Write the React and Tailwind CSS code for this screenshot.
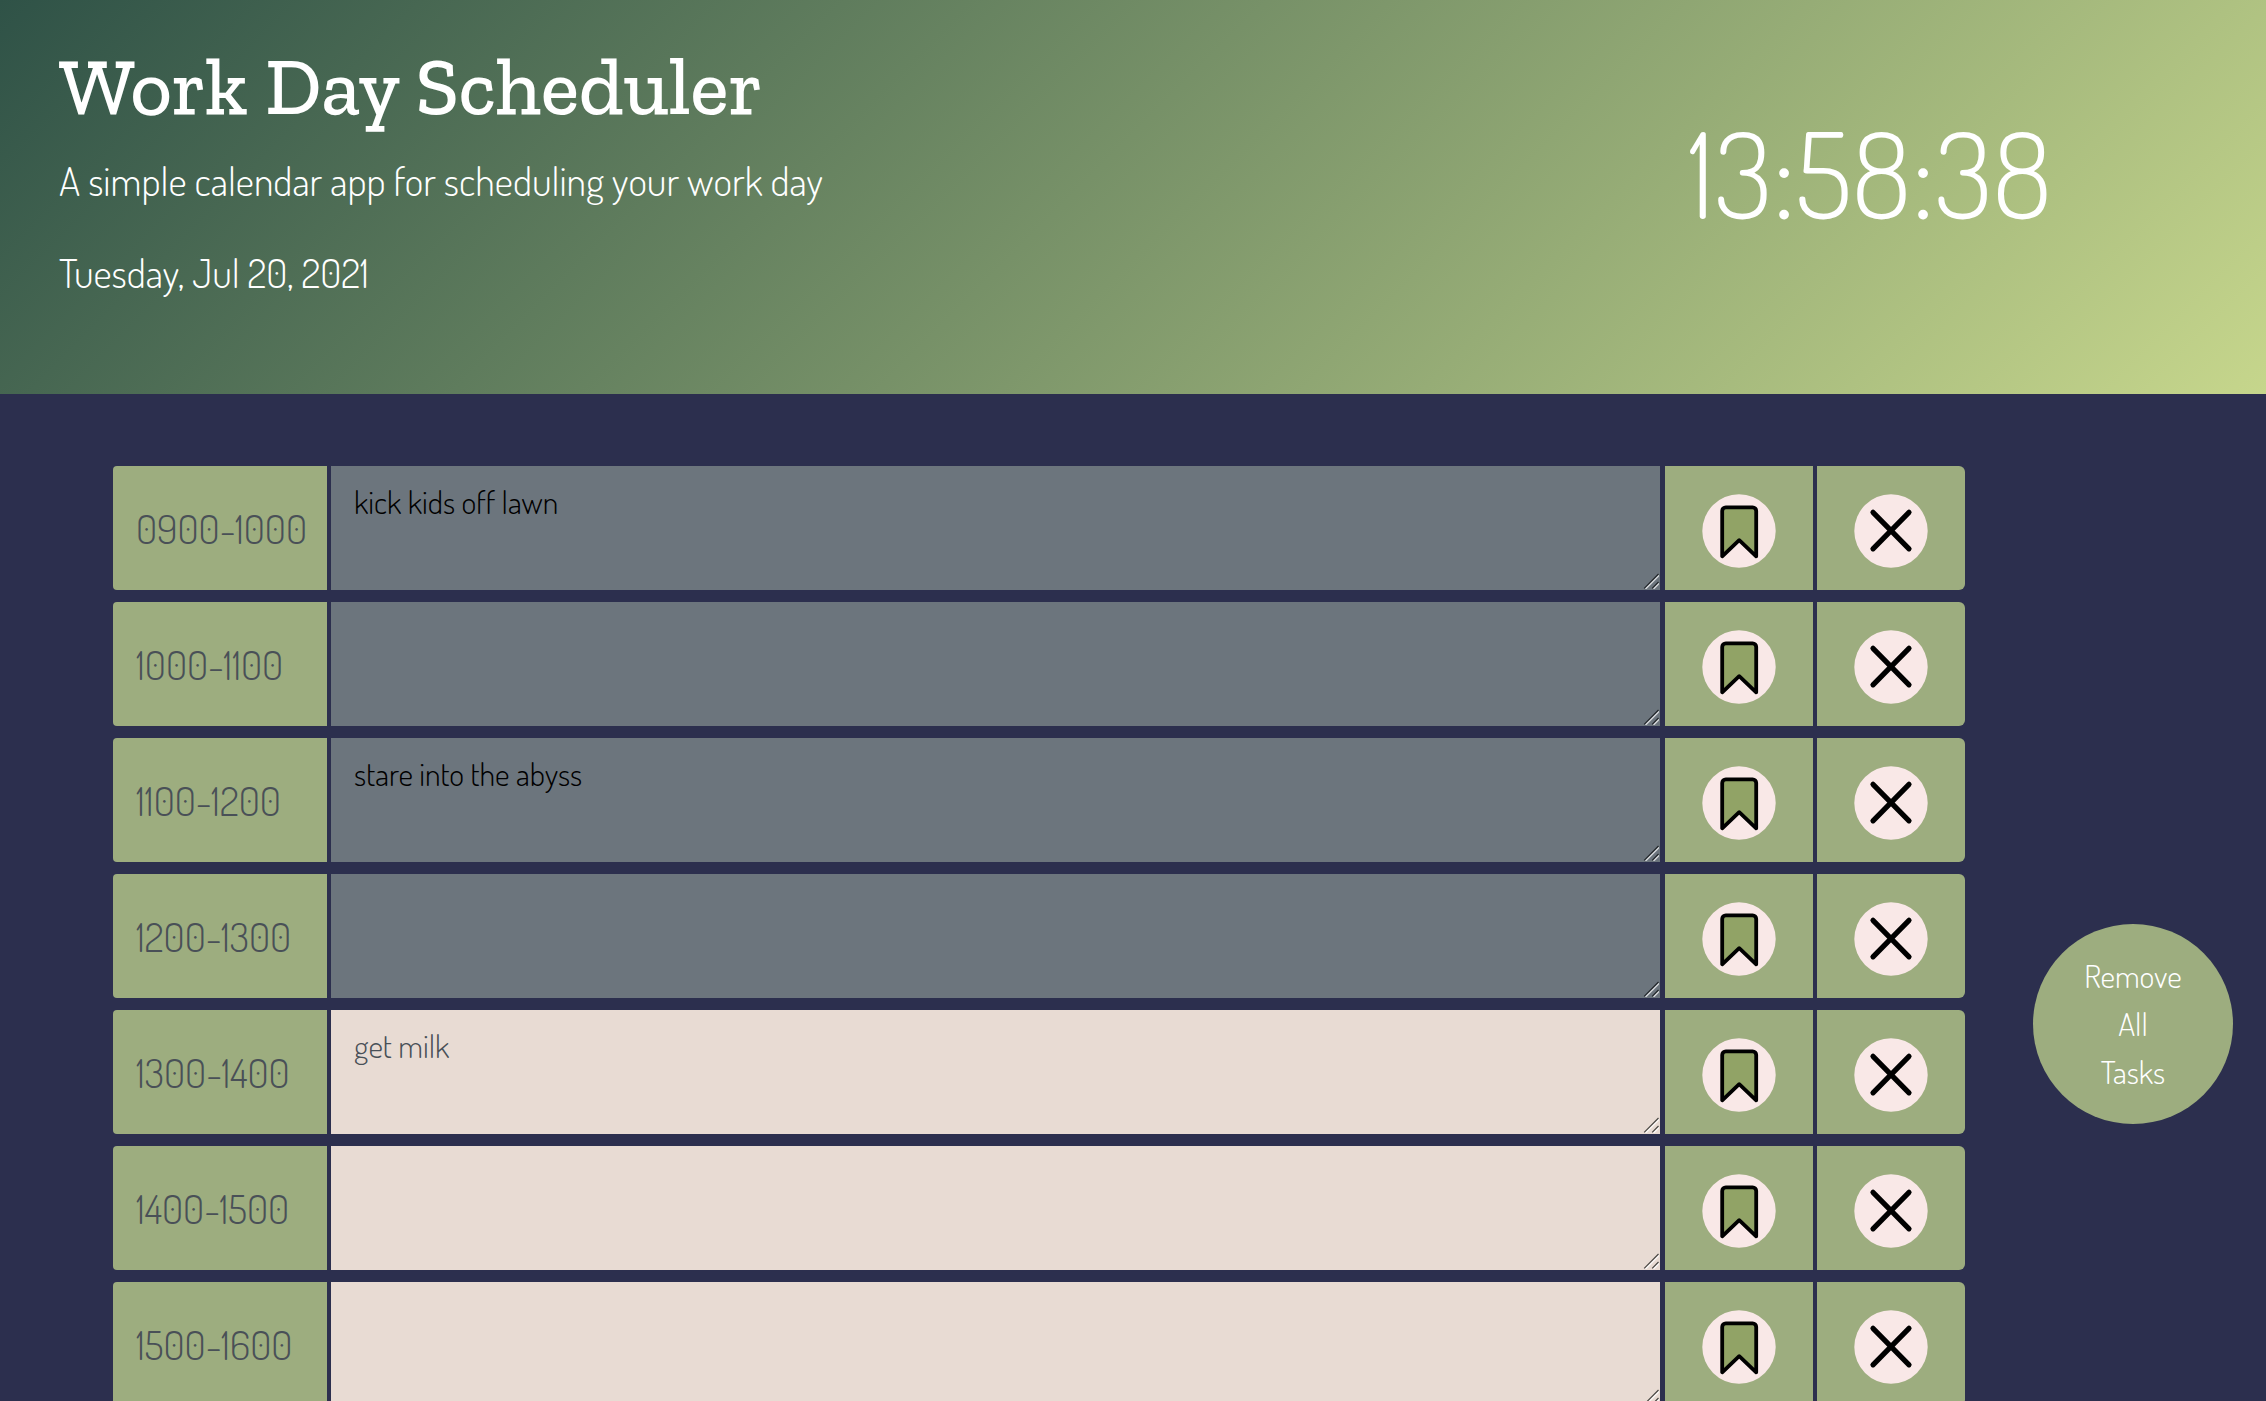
const slots = [
  { time: "0900-1000", task: "kick kids off lawn", past: true },
  { time: "1000-1100", task: "", past: true },
  { time: "1100-1200", task: "stare into the abyss", past: true },
  { time: "1200-1300", task: "", past: true },
  { time: "1300-1400", task: "get milk", past: false },
  { time: "1400-1500", task: "", past: false },
  { time: "1500-1600", task: "", past: false },
];

function BookmarkIcon() {
  return (
    <svg viewBox="0 0 74 74" className="size-[74px]" aria-hidden="true">
      <circle cx="37" cy="37" r="36.7" fill="#f9e8e7" />
      <path
        d="M20.2 62.3V17a3.6 3.6 0 0 1 3.6-3.6h26.8a3.6 3.6 0 0 1 3.6 3.6v45.3L37.2 46.2Z"
        fill="#91a366"
        stroke="#000"
        strokeWidth="3.8"
        strokeLinejoin="round"
      />
    </svg>
  );
}

function CloseIcon() {
  return (
    <svg viewBox="0 0 74 74" className="size-[74px]" aria-hidden="true">
      <circle cx="37" cy="37" r="36.7" fill="#f9e8e7" />
      <path d="M19 18.3 55 54.8M55 18.3 19 54.8" stroke="#000" strokeWidth="5.2" strokeLinecap="round" />
    </svg>
  );
}

function Grip({ past }) {
  const dark = past ? "#22262a" : "#4a4743";
  const light = past ? "#d4d7da" : "#fbf8f6";
  return (
    <svg viewBox="0 0 16 16" className="pointer-events-none absolute right-px bottom-px size-4" aria-hidden="true">
      <path d="M2.5 15.8 16 2.3M10.5 15.8 16 10.3" stroke={light} strokeWidth="1.8" />
      <path d="M1.2 15.3 15.5 1M9.2 15.3 15.5 9" stroke={dark} strokeWidth="1.2" />
    </svg>
  );
}

function SlotRow({ time, task, past }) {
  return (
    <li className="grid h-[124px] grid-cols-[214px_minmax(0,1fr)_148px_148px] gap-1">
      <label
        htmlFor={time}
        className="flex items-center rounded-l bg-[#9dad7f] pl-[23px] text-[40px] leading-none text-[#495057]"
      >
        {time}
      </label>
      <div className="relative mr-px">
        <textarea
          id={time}
          defaultValue={task}
          className={
            past
              ? "block size-full resize-none bg-[#6c757d] px-[23px] py-3 text-[32px] leading-[48px] text-black outline-none"
              : "block size-full resize-none bg-[#e8dbd3] px-[23px] py-3 text-[32px] leading-[48px] text-[#495057] outline-none"
          }
        />
        <Grip past={past} />
      </div>
      <button type="button" aria-label="Save task" className="flex items-center justify-center bg-[#9dad7f] pt-1.5">
        <BookmarkIcon />
      </button>
      <button type="button" aria-label="Remove task" className="flex items-center justify-center rounded-r-md bg-[#9dad7f] pt-1.5">
        <CloseIcon />
      </button>
    </li>
  );
}

export default function App() {
  return (
    <div className="h-screen overflow-y-auto bg-[#2c2f4e] font-['Dosis','Liberation_Sans_Narrow','Lato',sans-serif] font-light [scrollbar-width:none]">
      <header className="flex h-[394px] items-start justify-between bg-[linear-gradient(135deg,#2f5247_0%,#c6d68c_100%)] pr-[214px] pl-[59px] text-white">
        <div className="pt-[38px]">
          <h1 className="font-['Zilla_Slab','DejaVu_Serif_Condensed','DejaVu_Serif',serif] text-[80px] leading-[96px] font-medium">
            Work Day Scheduler
          </h1>
          <p className="mt-4 text-[40px] leading-[60px]">A simple calendar app for scheduling your work day</p>
          <p className="mt-8 text-[40px] leading-[60px]">Tuesday, Jul 20, 2021</p>
        </div>
        <p className="pt-[106px] text-[120px] leading-[132px]">13:58:38</p>
      </header>
      <div className="flex items-start pt-[72px] pr-[33px] pb-10 pl-[113px]">
        <main className="min-w-0 flex-1">
          <ul className="flex flex-col gap-3">
            {slots.map((slot) => (
              <SlotRow key={slot.time} {...slot} />
            ))}
          </ul>
        </main>
        <aside className="ml-[68px] pt-[458px]">
          <button
            type="button"
            className="flex size-[200px] flex-col items-center justify-center rounded-full bg-[#9dad7f] text-[32px] leading-[48px] text-white"
          >
            <span>Remove</span>
            <span>All</span>
            <span>Tasks</span>
          </button>
        </aside>
      </div>
    </div>
  );
}
